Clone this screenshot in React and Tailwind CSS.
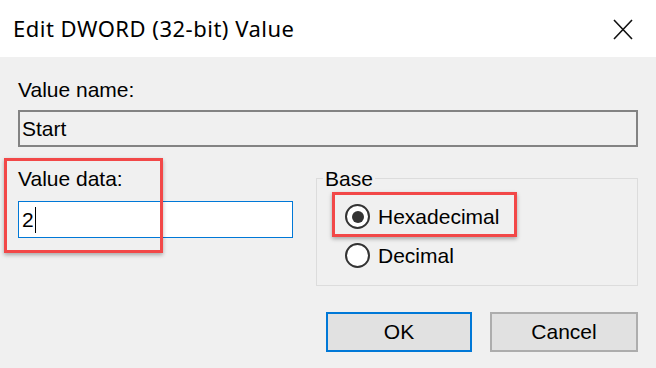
import React from "react";

const sans = "font-['Liberation_Sans',Arial,sans-serif]";

function Radio({ checked }) {
  return (
    <span className="w-[25px] h-[25px] rounded-full border-2 border-[#333] bg-white flex items-center justify-center shrink-0">
      {checked && <span className="w-[12px] h-[12px] rounded-full bg-[#333]" />}
    </span>
  );
}

export default function App() {
  return (
    <div className={`w-[656px] h-[368px] bg-[#f0f0f0] overflow-hidden text-black ${sans}`}>
      {/* Title bar */}
      <div className="h-[57px] bg-white flex items-center justify-between pl-[13px] pr-[23px]">
        <h1 className="font-['Noto_Sans',sans-serif] text-[22px] tracking-[0.5px] leading-none mb-[1px]">
          Edit DWORD (32-bit) Value
        </h1>
        <svg width="20" height="21" viewBox="0 0 20 21" className="mt-[1px]">
          <path d="M1 1 L19 20 M19 1 L1 20" stroke="#111" strokeWidth="1.6" fill="none" />
        </svg>
      </div>

      {/* Body */}
      <div className="px-[18px] pt-[21px] text-[21px]">
        <div className="leading-6">Value name:</div>
        <div className="mt-2 h-[37px] border-2 border-[#838383] flex items-center px-[2px] leading-6">
          Start
        </div>

        <div className="flex gap-[23px] mt-[11px]">
          {/* Value data */}
          <div className="relative w-[275px] pt-[9px]">
            <div className="leading-6">Value data:</div>
            <div className="mt-[10px] h-[37px] bg-white border border-[#0078d7] flex items-center pl-[3px] leading-6">
              2<span className="w-px h-[26px] bg-black ml-[1px]" />
            </div>
            <div className="absolute left-[-14px] top-0 w-[159px] h-[95px] border-[3px] border-[#f24848] shadow-[0_2px_4px_rgba(0,0,0,0.3)]" />
          </div>

          {/* Base group */}
          <div className="relative w-[322px] h-[108px] mt-[20px] border border-[#dcdcdc]">
            <span className="absolute left-[6px] top-[-12px] bg-[#f0f0f0] px-[2px] leading-6">Base</span>
            <div className="flex flex-col pt-[18px] pl-[28px]">
              <div className="h-[39px] flex items-center gap-[8px] leading-6">
                <Radio checked />
                <span>Hexadecimal</span>
              </div>
              <div className="h-[39px] flex items-center gap-[8px] leading-6">
                <Radio />
                <span>Decimal</span>
              </div>
            </div>
            <div className="absolute left-[15px] top-[13px] w-[185px] h-[45px] border-[3px] border-[#f24848] shadow-[0_2px_4px_rgba(0,0,0,0.3)]" />
          </div>
        </div>

        {/* Buttons */}
        <div className="flex justify-end gap-[18px] mt-[26px]">
          <button className="w-[146px] h-[40px] bg-[#e1e1e1] border-2 border-[#0078d7] leading-6">OK</button>
          <button className="w-[148px] h-[40px] bg-[#e1e1e1] border-2 border-[#adadad] leading-6">Cancel</button>
        </div>
      </div>
    </div>
  );
}
